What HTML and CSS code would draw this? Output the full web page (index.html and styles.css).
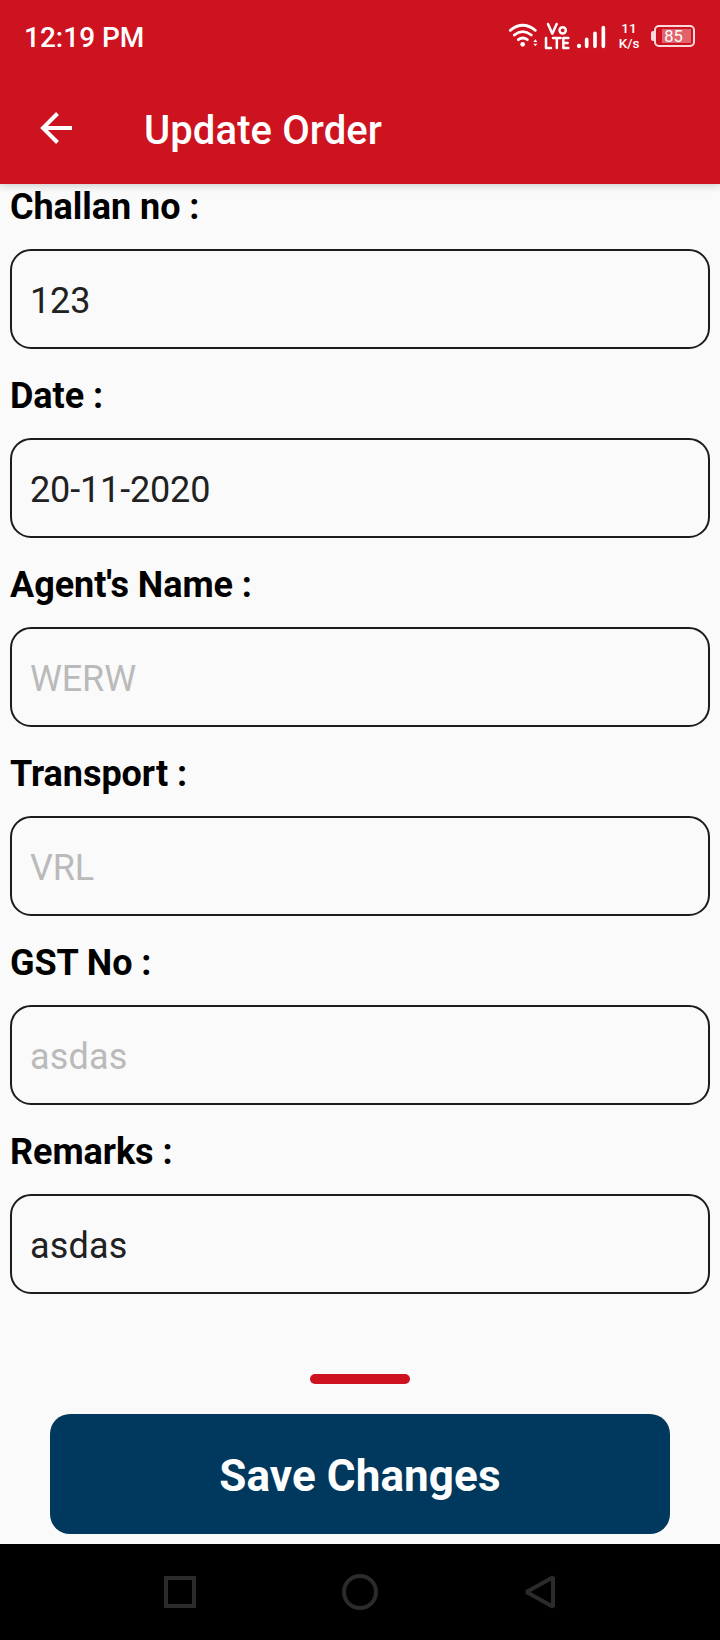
FILE: index.html
```html
<!DOCTYPE html>
<html lang="en">
<head>
<meta charset="utf-8">
<title>Update Order</title>
<link rel="stylesheet" href="styles.css">
</head>
<body>
<div class="screen">
  <header class="header">
    <div class="status">
      <span class="clock">12:19 PM</span>
      <div class="status-icons">
        <svg class="wifi" viewBox="54 54 96 108">
          <g fill="none" stroke="#fff" stroke-width="8.500" stroke-linecap="round">
            <path d="M61 91Q98 61 136 91"/>
            <path d="M73 105Q98 85 124 105"/>
            <path d="M85 119Q98 109 112 119"/>
          </g>
          <circle cx="98" cy="133" r="7" fill="#fff"/>
          <path d="M130 126l6-8 6 8zM130 131h12l-6 8z" fill="#fff"/>
        </svg>
        <svg class="volte" viewBox="150 54 96 108">
          <g fill="none" stroke="#fff" stroke-width="7.500" stroke-linecap="round" stroke-linejoin="round">
            <path d="M174 72l13 29 13-29"/>
            <circle cx="218" cy="91" r="9.500"/>
            <path d="M168 114v30h15M189 114h23M200.500 114v30M235 114h-15v30h15M220 129h13"/>
          </g>
        </svg>
        <svg class="signal" viewBox="246 54 114 108">
          <circle cx="267" cy="138" r="6.500" fill="#fff"/>
          <g stroke="#fff" stroke-width="11" stroke-linecap="round">
            <path d="M290 118v21M315 100v39M340 83v56"/>
          </g>
        </svg>
        <div class="speed"><span>11</span><span>K/s</span></div>
        <div class="battery"><span class="battery-fill"></span><span class="battery-text">85</span></div>
      </div>
    </div>
    <div class="toolbar">
      <svg class="back" viewBox="0 0 34 34">
        <path d="M32 17H3M17.500 2.500L3 17l14.500 14.500" fill="none" stroke="#fff" stroke-width="4"/>
      </svg>
      <h1 class="title">Update Order</h1>
    </div>
  </header>
  <main class="form">
    <label class="field"><span class="label">Challan no :</span><input class="input" value="123"></label>
    <label class="field"><span class="label">Date :</span><input class="input" value="20-11-2020"></label>
    <label class="field"><span class="label">Agent's Name :</span><input class="input" placeholder="WERW"></label>
    <label class="field"><span class="label">Transport :</span><input class="input" placeholder="VRL"></label>
    <label class="field"><span class="label">GST No :</span><input class="input letters" placeholder="asdas"></label>
    <label class="field"><span class="label">Remarks :</span><input class="input letters" value="asdas"></label>
  </main>
  <footer class="actions">
    <div class="handle"></div>
    <button class="save">Save Changes</button>
  </footer>
  <nav class="navbar">
    <svg class="nav-icon" viewBox="0 0 36 36"><rect x="4" y="4" width="28" height="28"/></svg>
    <svg class="nav-icon" viewBox="0 0 36 36"><circle cx="18" cy="18" r="16"/></svg>
    <svg class="nav-icon" viewBox="0 0 36 36"><path d="M31 3.300V32.700L4.500 18z" stroke-linejoin="bevel"/></svg>
  </nav>
</div>
</body>
</html>
```
FILE: styles.css
```css
* { box-sizing: border-box; }
body { margin: 0; font-family: Roboto, sans-serif; background: #fafafa; }
svg { display: block; flex: none; }
.screen { width: 720px; height: 1640px; display: flex; flex-direction: column; overflow: hidden; }
.header { height: 184px; flex: none; background: #cd131f; color: #fff; box-shadow: 0 1px 8px rgba(0, 0, 0, .22); }
.status { height: 72px; display: flex; justify-content: space-between; align-items: center; padding: 2px 24px 0; }
.clock { margin-top: 2px; font-size: 28px; font-weight: 500; line-height: 32px; }
.status-icons { display: flex; align-items: center; }
.wifi, .volte { width: 32px; height: 36px; }
.wifi, .volte, .signal { margin-top: -2px; }
.signal { width: 38px; height: 36px; }
.speed { width: 38px; margin-top: -3px; display: flex; flex-direction: column; align-items: center; font-size: 13.5px; font-weight: 500; line-height: 15px; }
.battery { position: relative; width: 41px; height: 22px; margin: -2px 1px 0 6px; border: 2px solid #f9d9dc; border-radius: 5px; padding: 2px 2px 2px 6px; }
.battery::before { content: ""; position: absolute; left: -5px; top: 4px; width: 3px; height: 10px; border-radius: 2px 0 0 2px; background: #f9d9dc; }
.battery-fill { display: block; height: 14px; background: #e1636c; }
.battery-text { position: absolute; left: 0; top: 0; width: 35px; text-align: center; font-size: 16.5px; line-height: 19px; }
.toolbar { height: 112px; display: flex; align-items: center; padding: 0 40px; }
.back { width: 34px; height: 34px; }
.title { margin: 5px 0 0 70px; font-size: 40px; line-height: 48px; font-weight: 500; letter-spacing: .1px; }
.form { padding: 2px 10px 0; display: flex; flex-direction: column; gap: 26px; }
.field { display: flex; flex-direction: column; gap: 21px; }
.label { font-size: 36px; line-height: 42px; font-weight: 700; letter-spacing: -.05px; color: #000; }
.input { width: 100%; height: 100px; padding: 4px 18px 0; border: 2px solid #1c1c1c; border-radius: 21px; background: transparent; font: 400 36px Roboto, sans-serif; letter-spacing: -.15px; color: #212121; outline: none; }
.letters { letter-spacing: .2px; }
.input::placeholder { color: #bababa; opacity: 1; }
.actions { flex: 1; display: flex; flex-direction: column; align-items: center; justify-content: flex-end; gap: 30px; padding-bottom: 10px; }
.handle { width: 100px; height: 10px; border-radius: 5px; background: #cd131f; }
.save { width: 620px; height: 120px; border: 0; border-radius: 20px; padding: 4px 0 0; background: #01395e; color: #fff; font: 700 44px Roboto, sans-serif; letter-spacing: .1px; }
.navbar { height: 96px; flex: none; display: flex; justify-content: center; align-items: center; gap: 144px; background: #000; }
.nav-icon { width: 36px; height: 36px; fill: none; stroke: #2b2b2b; stroke-width: 4; }
```
